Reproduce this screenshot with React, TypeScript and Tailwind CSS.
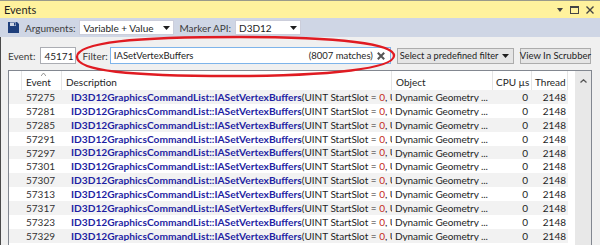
import React from "react";

const events = [57275, 57281, 57285, 57291, 57297, 57301, 57307, 57313, 57317, 57323, 57329];

function Caret() {
  return (
    <svg width="7" height="4" viewBox="0 0 7 4" className="shrink-0">
      <path d="M0 0 L7 0 L3.5 4 Z" fill="#1e1e1e" />
    </svg>
  );
}

function SaveIcon() {
  return (
    <svg width="11" height="11" viewBox="0 0 11 11">
      <path d="M0 0 H9 L11 2 V11 H0 Z" fill="#1f3f7c" />
      <rect x="2" y="0.5" width="6" height="3.5" fill="#cfd6e5" />
      <rect x="6" y="1" width="1.5" height="2.5" fill="#1f3f7c" />
      <rect x="2" y="6.5" width="7" height="4.5" fill="#1f3f7c" />
    </svg>
  );
}

export default function App() {
  return (
    <div className="relative w-[600px] h-[245px] overflow-hidden bg-[#f0f0f0] font-['Lato',sans-serif] text-[10px] text-[#1e1e1e] leading-none whitespace-nowrap">
      {/* Title bar */}
      <div className="h-[18px] bg-[#fff29d] border-t border-[#9a9a8a] flex items-center justify-between pl-[4px] pr-[6px]">
        <span className="text-[11px] text-[#1e1e1e]">Events</span>
        <div className="flex items-center gap-[7px]">
          <svg width="6" height="4" viewBox="0 0 6 4">
            <path d="M0 0 L6 0 L3 4 Z" fill="#444" />
          </svg>
          <svg width="9" height="8" viewBox="0 0 9 8">
            <rect x="0.5" y="0.5" width="8" height="7" fill="none" stroke="#444" />
            <rect x="0" y="0" width="9" height="2" fill="#444" />
          </svg>
          <svg width="8" height="8" viewBox="0 0 8 8">
            <path d="M0.5 0.5 L7.5 7.5 M7.5 0.5 L0.5 7.5" stroke="#444" strokeWidth="1.4" />
          </svg>
        </div>
      </div>

      {/* Toolbar */}
      <div className="h-[19px] bg-[#cfd6e5] flex items-center pl-[8px]">
        <SaveIcon />
        <span className="ml-[6px] text-[#3c3c3c]">Arguments:</span>
        <div className="ml-[4px] w-[95px] h-[15px] bg-white border border-[#cccedb] flex items-center justify-between pl-[3px] pr-[3px]">
          <span>Variable + Value</span>
          <Caret />
        </div>
        <span className="ml-[5px] text-[#3c3c3c]">Marker API:</span>
        <div className="ml-[4px] w-[66px] h-[15px] bg-white border border-[#cccedb] flex items-center justify-between pl-[3px] pr-[3px]">
          <span>D3D12</span>
          <Caret />
        </div>
      </div>

      {/* Body */}
      <div className="h-[208px] border-l border-[#4a4a4a] flex flex-col">
        {/* Filter row */}
        <div className="h-[33px] flex items-start pt-[10px] pl-[7px] text-[9.5px]">
          <span className="h-[17px] flex items-center text-[#3c3c3c] text-[10px]">Event:</span>
          <div className="ml-[5px] w-[36px] h-[17px] bg-white border border-[#abadb3] flex items-center pl-[3px] text-[10px]">
            45171
          </div>
          <span className="ml-[6px] h-[17px] flex items-center text-[#3c3c3c] text-[10px]">Filter:</span>
          <div className="ml-[2px] w-[281px] h-[17px] bg-white border border-[#7eb4ea] flex items-center justify-between pl-[3px] pr-[5px]">
            <span>IASetVertexBuffers</span>
            <div className="flex items-center gap-[4px]">
              <span>(8007 matches)</span>
              <svg width="8" height="8" viewBox="0 0 8 8">
                <path d="M0.8 0.8 L7.2 7.2 M7.2 0.8 L0.8 7.2" stroke="#555" strokeWidth="2" />
              </svg>
            </div>
          </div>
          <div className="ml-[6px] w-[117px] h-[16px] mt-[1px] bg-[#e5e5e5] border border-[#acacac] flex items-center justify-between pl-[2px] pr-[4px] text-[9.2px]">
            <span>Select a predefined filter</span>
            <Caret />
          </div>
          <div className="ml-[6px] w-[71px] h-[16px] mt-[1px] bg-[#e5e5e5] border border-[#acacac] flex items-center justify-center">
            View In Scrubber
          </div>
        </div>

        {/* Table */}
        <div className="ml-[7px] w-[584px] flex-1 bg-white border-t border-l border-r border-[#828790] flex overflow-hidden">
          <div className="w-[566px] flex flex-col">
            <div className="h-[19px] flex shrink-0 text-[#1e1e1e]">
              <div className="w-[13px] border-r border-[#e5e5e5]" />
              <div className="relative w-[40px] border-r border-[#e5e5e5] flex items-center pl-[4px] pt-[3px]">
                <svg width="5" height="3" viewBox="0 0 5 3" className="absolute left-[19px] top-[2px]">
                  <path d="M0 3 L2.5 0 L5 3" fill="none" stroke="#8a8a8a" strokeWidth="0.9" />
                </svg>
                Event
              </div>
              <div className="w-[330px] border-r border-[#e5e5e5] flex items-center pl-[4px] pt-[3px]">Description</div>
              <div className="w-[101px] border-r border-[#e5e5e5] flex items-center pl-[4px] pt-[3px]">Object</div>
              <div className="w-[39px] border-r border-[#e5e5e5] flex items-center pl-[3px] pt-[3px] overflow-hidden">CPU µs</div>
              <div className="w-[36px] border-r border-[#e5e5e5] flex items-center pl-[3px] pt-[3px] overflow-hidden">Thread</div>
            </div>
            {events.map((ev, i) => (
              <div key={ev} className={`h-[13.9px] flex shrink-0 items-center ${i % 2 === 0 ? "bg-[#f2f2f2]" : "bg-white"}`}>
                <div className="w-[13px]" />
                <div className="w-[40px] pl-[4px] text-[#333]">{ev}</div>
                <div className="w-[330px] pl-[9px] overflow-hidden">
                  <span className="font-bold text-[10.2px] text-[#1f1fa3]">ID3D12GraphicsCommandList::IASetVertexBuffers</span>
                  <span>(UINT StartSlot = </span>
                  <span className="text-[#c42b1c]">0</span>
                  <span>, U</span>
                </div>
                <div className="w-[101px] pl-[3px] overflow-hidden tracking-[-0.1px]">Dynamic Geometry ...</div>
                <div className="w-[39px] pr-[4px] text-right">0</div>
                <div className="w-[36px] pr-[2px] text-right">2148</div>
              </div>
            ))}
          </div>
          <div className="w-[7px]" />
          <div className="w-[16px] bg-[#e8e8e8] flex justify-center pt-[8px]">
            <svg width="7" height="4" viewBox="0 0 7 4">
              <path d="M0.5 3.5 L3.5 0.8 L6.5 3.5" fill="none" stroke="#555" strokeWidth="1.3" />
            </svg>
          </div>
        </div>
      </div>

      {/* Red annotation ellipse */}
      <svg className="absolute left-0 top-0 pointer-events-none" width="600" height="245" viewBox="0 0 600 245">
        <path
          d="M77 57 C77 42, 135 37, 240 37 C340 37, 395 44, 394 56 C393 68, 335 76, 230 76 C130 76, 77 71, 77 57 Z"
          fill="none"
          stroke="#e01b22"
          strokeWidth="2.3"
        />
      </svg>
    </div>
  );
}
